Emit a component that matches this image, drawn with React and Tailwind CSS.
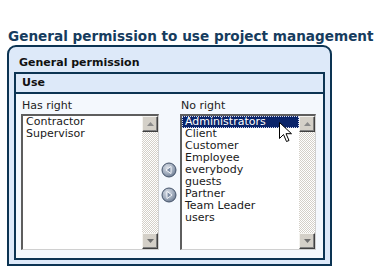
import React from "react";

const hasRight = ["Contractor", "Supervisor"];
const noRight = ["Administrators", "Client", "Customer", "Employee", "everybody", "guests", "Partner", "Team Leader", "users"];

function ScrollButton({ down }) {
  return (
    <div className="w-[16px] h-[16px] bg-[#d4d0c8] border-t border-l border-[#f4f3ef] border-r border-b border-r-[#404040] border-b-[#404040] shadow-[inset_-1px_-1px_#808080] flex items-center justify-center">
      <svg width="7" height="4" viewBox="0 0 7 4">
        {down ? <path d="M0 0h7L3.5 4z" fill="#6e6e6e" /> : <path d="M0 4h7L3.5 0z" fill="#8a8a8a" />}
      </svg>
    </div>
  );
}

function ListBox({ items, width, selected }) {
  return (
    <div className={`${width} h-[136px] flex bg-white border-t-2 border-l-2 border-[#5e5e5e] border-b border-r border-b-[#d0d0d0] border-r-[#d0d0d0]`}>
      <div className="flex-1 flex flex-col">
        {items.map((item, i) => (
          <div
            key={item}
            className={`h-[12px] leading-[12px] pl-[3px] text-[11px] whitespace-nowrap ${
              i === selected ? "bg-[#0a246a] text-white outline-1 outline-dotted outline-[#d8dcef] -outline-offset-1" : "text-[#1a1a1a]"
            }`}
          >
            {item}
          </div>
        ))}
      </div>
      <div className="w-[16px] flex flex-col bg-[repeating-conic-gradient(#d4d0c8_0_25%,#ffffff_0_50%)] bg-[length:2px_2px]">
        <ScrollButton />
        <div className="flex-1" />
        <ScrollButton down />
      </div>
    </div>
  );
}

function MoveButton({ left }) {
  return (
    <svg width="16" height="16" viewBox="0 0 16 16">
      <defs>
        <radialGradient id={left ? "gl" : "gr"} cx="0.4" cy="0.35" r="0.7">
          <stop offset="0" stopColor="#dfe4ec" />
          <stop offset="0.6" stopColor="#9eaabb" />
          <stop offset="1" stopColor="#66758c" />
        </radialGradient>
      </defs>
      <circle cx="8" cy="8" r="7" fill={`url(#${left ? "gl" : "gr"})`} stroke="#46556b" strokeWidth="1" />
      {left ? (
        <path d="M10 4.5v7L5 8z" fill="#7f8ea5" stroke="#f4f6fa" strokeWidth="1" strokeLinejoin="round" />
      ) : (
        <path d="M6 4.5v7L11 8z" fill="#7f8ea5" stroke="#f4f6fa" strokeWidth="1" strokeLinejoin="round" />
      )}
    </svg>
  );
}

export default function App() {
  return (
    <div className="relative w-[381px] h-[274px] bg-white font-['DejaVu_Sans',Verdana,sans-serif] overflow-hidden">
      <h1 className="pt-[28px] pl-[8px] text-[13.6px] leading-[17px] font-bold text-[#163c5e] whitespace-nowrap">
        General permission to use project management
      </h1>
      <div className="ml-[7px] w-[325px] h-[221px] border-2 border-[#0c3453] rounded-t-[9px] bg-[#dde9f9] px-[5px]">
        <div className="h-[25px] pt-[9px] pl-[5px] text-[11px] leading-[13px] font-bold text-[#111]">General permission</div>
        <div className="h-[188px] border-2 border-[#0c3453] bg-[#f4f8fd]">
          <div className="h-[20px] border-b-2 border-[#0c3453] bg-[#dde9f9] pl-[6px] text-[11px] leading-[18px] font-bold text-[#111]">Use</div>
          <div className="flex pl-[5px] pt-[5px]">
            <div className="flex flex-col">
              <div className="h-[13px] leading-[13px] text-[11px] text-[#222] pl-[1px]">Has right</div>
              <div className="mt-[2px]">
                <ListBox items={hasRight} width="w-[138px]" selected={-1} />
              </div>
            </div>
            <div className="w-[21px] pt-[15px] flex flex-col justify-center items-center gap-[9px] pr-[2px]">
              <MoveButton left />
              <MoveButton />
            </div>
            <div className="flex flex-col">
              <div className="h-[13px] leading-[13px] text-[11px] text-[#222] pl-[1px]">No right</div>
              <div className="mt-[2px]">
                <ListBox items={noRight} width="w-[136px]" selected={0} />
              </div>
            </div>
          </div>
        </div>
      </div>
      <svg className="absolute left-[279px] top-[122px]" width="13" height="21" viewBox="0 0 13 21">
        <path d="M0.5 0.5v16l4-4 3 7 2.5-1-3-6.8h5.5z" fill="#fff" stroke="#000" strokeWidth="1" strokeLinejoin="miter" />
      </svg>
    </div>
  );
}
